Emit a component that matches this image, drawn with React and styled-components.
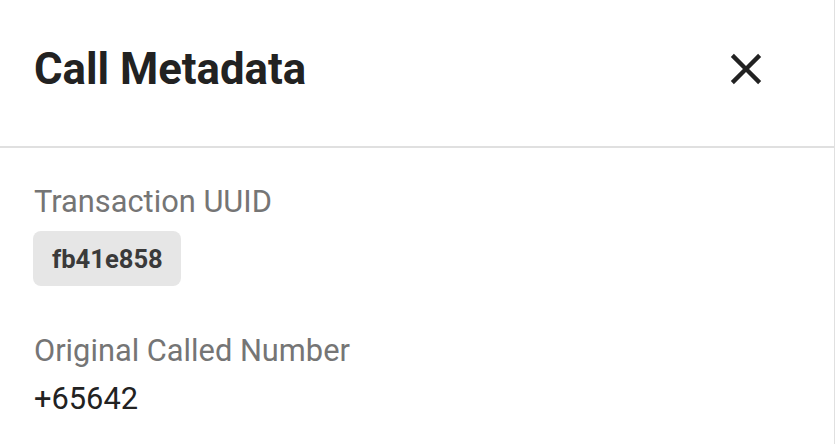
import React from "react";
import styled, { createGlobalStyle } from "styled-components";

const Global = createGlobalStyle`
  html, body { margin: 0; padding: 0; background: #fff; }
  body { font-family: Roboto, "Noto Sans", sans-serif; }
`;

const Panel = styled.aside`
  width: 835px;
  height: 444px;
  box-sizing: border-box;
  border-right: 1px solid #e0e0e0;
  background: #fff;
  display: flex;
  flex-direction: column;
  overflow: hidden;
`;

const Header = styled.header`
  height: 148px;
  flex-shrink: 0;
  box-sizing: border-box;
  display: flex;
  align-items: center;
  justify-content: space-between;
  padding: 0 62px 8px 34px;
  border-bottom: 2px solid #e0e0e0;
`;

const Title = styled.h1`
  margin: 0;
  font-family: Roboto, sans-serif;
  font-weight: 700;
  font-size: 43.7px;
  line-height: normal;
  color: #222;
`;

const CloseButton = styled.button`
  border: none;
  background: none;
  padding: 0;
  width: 52px;
  height: 52px;
  display: flex;
  align-items: center;
  justify-content: center;
  cursor: pointer;
  color: #222;
`;

const Body = styled.div`
  display: flex;
  flex-direction: column;
  gap: 47px;
  padding: 36px 34px 0;
`;

const Field = styled.div`
  display: flex;
  flex-direction: column;
  align-items: flex-start;
  gap: ${(p) => p.$gap}px;
`;

const Label = styled.div`
  font-size: 30.8px;
  line-height: 36px;
  color: #757575;
`;

const Chip = styled.span`
  display: inline-flex;
  align-items: center;
  box-sizing: border-box;
  height: 55px;
  padding: 0 18px 0 19px;
  margin-left: -1px;
  border-radius: 8px;
  background: #e6e6e6;
  color: #3a3a3a;
  font-weight: 700;
  font-size: 25.6px;
`;

const Value = styled.div`
  font-size: 30.8px;
  line-height: 36px;
  color: #222;
`;

export default function App() {
  return (
    <>
      <Global />
      <Panel>
        <Header>
          <Title>Call Metadata</Title>
          <CloseButton aria-label="close">
            <svg width="52" height="52" viewBox="0 0 24 24" fill="currentColor">
              <path d="M19 6.41 17.59 5 12 10.59 6.41 5 5 6.41 10.59 12 5 17.59 6.41 19 12 13.41 17.59 19 19 17.59 13.41 12z" />
            </svg>
          </CloseButton>
        </Header>
        <Body>
          <Field $gap={11}>
            <Label>Transaction UUID</Label>
            <Chip>fb41e858</Chip>
          </Field>
          <Field $gap={12}>
            <Label>Original Called Number</Label>
            <Value>+65642</Value>
          </Field>
        </Body>
      </Panel>
    </>
  );
}
